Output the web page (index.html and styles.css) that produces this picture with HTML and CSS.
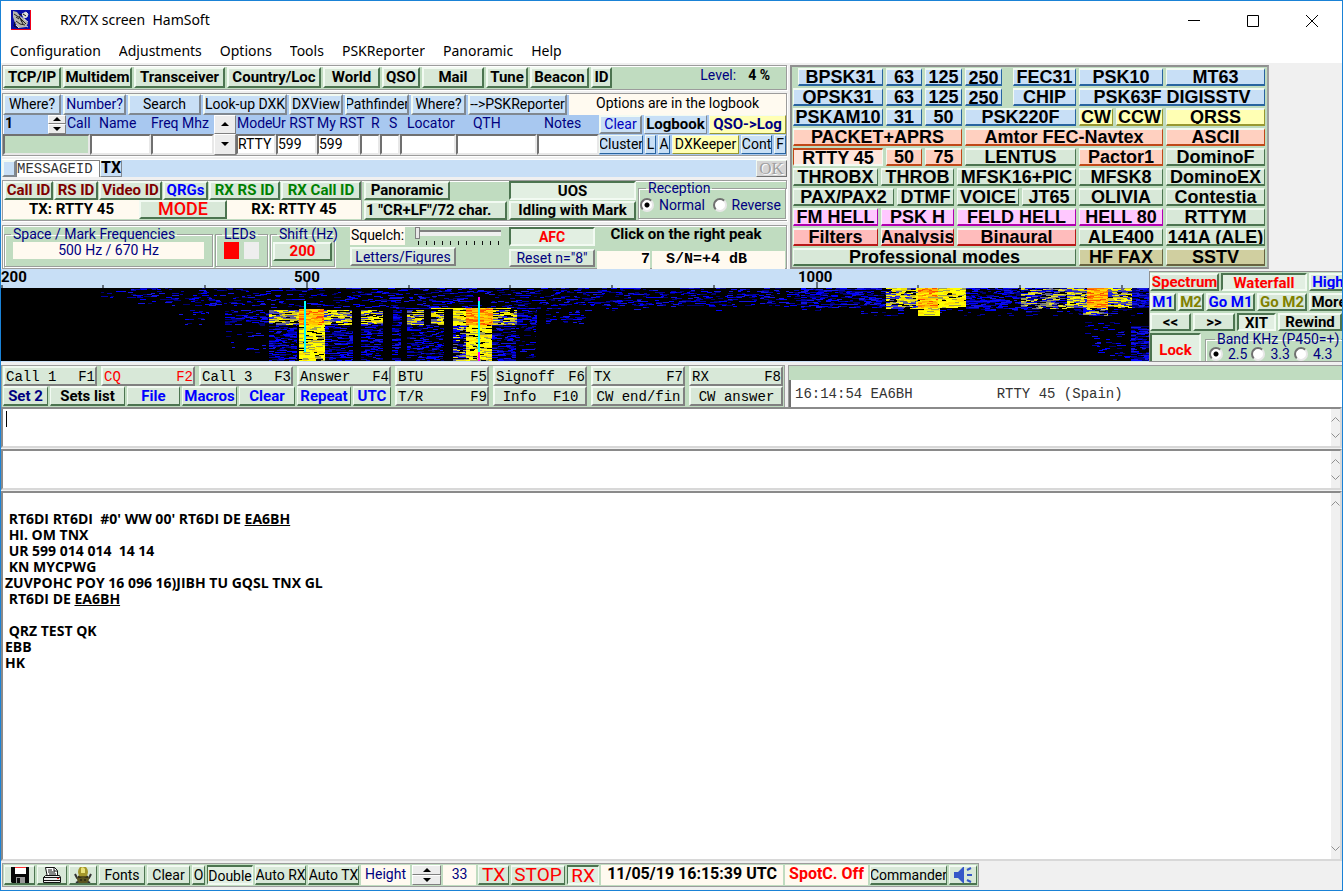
FILE: index.html
```html
<!DOCTYPE html>
<html lang="en">
<head>
<meta charset="utf-8">
<title>RX/TX screen HamSoft</title>
<link rel="stylesheet" href="styles.css">
</head>
<body>
<div class="window">
  <header class="titlebar">
    <svg class="app-icon" viewBox="0 0 20 20" aria-hidden="true">
      <rect width="20" height="20" fill="#f00018"/><rect width="19" height="19" fill="#0a10a8"/>
      <path d="M2 1l4 1 3 4 5 3 3 4-2 4-7 1-4-5-2-6z" fill="#b8b8b0"/>
      <path d="M3 4l6 4 6 6M5 11l4 3 5 1M8 6l3 6M5 7l3 2M10 10l2 4" stroke="#222" fill="none"/>
      <path d="M11 4l4-2 2 2-1 3-3 1zM5 15l3 3M13 9l4 3M15 16l2 1" fill="#e4e4dc" stroke="#ddd"/>
      <path d="M12 4l3 2M4 12l-1 4 4 2M11 5l-3-1" stroke="#111" fill="none"/>
    </svg>
    <span class="title-text">RX/TX screen  HamSoft</span>
    <div class="caption-buttons">
      <button aria-label="Minimize"><svg viewBox="0 0 12 12"><path d="M0 5.500h12"/></svg></button>
      <button aria-label="Maximize"><svg viewBox="0 0 12 12"><path d="M.5.5h11v11H.5z"/></svg></button>
      <button aria-label="Close"><svg viewBox="0 0 12 12"><path d="M0 0l12 12M12 0L0 12"/></svg></button>
    </div>
  </header>
  <nav class="menubar">
    <button>Configuration</button><button>Adjustments</button><button>Options</button><button>Tools</button><button>PSKReporter</button><button>Panoramic</button><button>Help</button>
  </nav>

  <main class="upper">
    <div class="left">
      <section class="panel tools bold">
        <button class="b">TCP/IP</button><button class="b">Multidem</button><button class="b">Transceiver</button><button class="b">Country/Loc</button><button class="b">World</button><button class="b">QSO</button><button class="b">Mail</button><button class="b">Tune</button><button class="b">Beacon</button><button class="b">ID</button>
        <div class="level"><span>Level:</span><output>4 %</output></div>
      </section>

      <section class="panel logbook">
        <div class="lookup">
          <button class="b sky">Where?</button><button class="b sky navy">Number?</button><button class="b sky">Search</button><button class="b sky">Look-up DXK</button><button class="b sky">DXView</button><button class="b sky">Pathfinder</button><button class="b sky">Where?</button><button class="b sky">--&gt;PSKReporter</button>
          <span class="cream">Options are in the logbook</span>
        </div>
        <div class="entry">
          <div class="entry-fields">
            <div class="labels">
              <strong>1</strong>
              <span class="spin"><button aria-label="Next record"><i class="up"></i></button><button aria-label="Previous record"><i class="down"></i></button></span>
              <label for="f-call">Call</label><label for="f-name">Name</label><label for="f-freq">Freq Mhz</label>
              <button class="step" aria-label="Mode up"><i class="up"></i></button>
              <label for="f-mode">Mode</label><label for="f-ur">Ur RST</label><label for="f-my">My RST</label><label for="f-r">R</label><label for="f-s">S</label><label for="f-loc">Locator</label><label for="f-qth">QTH</label><label for="f-notes">Notes</label>
            </div>
            <div class="inputs">
              <input id="f-call" class="green"><input id="f-name"><input id="f-freq">
              <button class="step" aria-label="Mode down"><i class="down"></i></button>
              <input id="f-mode" value="RTTY"><input id="f-ur" value="599"><input id="f-my" value="599"><input id="f-r"><input id="f-s"><input id="f-loc"><input id="f-qth"><input id="f-notes">
            </div>
          </div>
          <div class="entry-actions">
            <div class="act1"><button class="b sky blue">Clear</button><button class="b sky bold">Logbook</button><button class="b yellow navy bold">QSO-&gt;Log</button></div>
            <div class="act2"><button class="b azure">Cluster</button><button class="b azure">L</button><button class="b azure">A</button><button class="b yellow">DXKeeper</button><button class="b azure">Cont</button><button class="b azure">F</button></div>
          </div>
        </div>
      </section>

      <section class="message">
        <button class="b sky" aria-label="Message"></button>
        <input aria-label="Message identifier" value="MESSAGEID">
        <button class="b sky bold">TX</button>
        <button class="b gray ok" disabled>OK</button>
      </section>

      <section class="panel ids bold">
        <div class="idbox">
          <div class="idrow"><button class="b maroon">Call ID</button><button class="b maroon">RS ID</button><button class="b maroon">Video ID</button><button class="b blue">QRGs</button><button class="b forest">RX RS ID</button><button class="b forest">RX Call ID</button></div>
          <div class="moderow"><span class="cream">TX: RTTY 45</span><button class="b red big">MODE</button><span class="cream">RX: RTTY 45</span></div>
        </div>
        <div class="pan"><button class="b">Panoramic</button><button class="b">1 "CR+LF"/72 char.</button></div>
        <div class="uos"><button class="b pressed">UOS</button><button class="b">Idling with Mark</button></div>
        <fieldset class="reception"><legend>Reception</legend>
          <label><input type="radio" name="rx" checked>Normal</label><label><input type="radio" name="rx">Reverse</label>
        </fieldset>
      </section>

      <section class="panel tuning">
        <fieldset><legend>Space / Mark Frequencies</legend><div class="cream navy freq">500 Hz / 670 Hz</div></fieldset>
        <fieldset><legend>LEDs</legend><div class="leds"><i class="led on"></i><i class="led"></i></div></fieldset>
        <fieldset><legend>Shift (Hz)</legend><button class="b red bold shift">200</button></fieldset>
        <div class="squelch">
          <div class="squelch-top"><label class="cream" for="squelch">Squelch:</label><span class="slider"><input id="squelch" type="range" value="0"></span></div>
          <button class="b navy soft">Letters/Figures</button>
        </div>
        <div class="afc"><button class="b pressed red bold">AFC</button><button class="b navy soft">Reset n="8"</button></div>
        <div class="peak"><strong>Click on the right peak</strong><div class="sn"><output class="cream">7</output><output class="cream">S/N=+4 dB</output></div></div>
      </section>
    </div>

    <section class="modes">
      <div class="m r1"><button class="b azure">BPSK31</button><button class="b azure">63</button><button class="b azure">125</button><button class="b azure low">250</button><button class="b azure after">FEC31</button><button class="b azure">PSK10</button><button class="b azure">MT63</button></div>
      <div class="m r2"><button class="b azure">QPSK31</button><button class="b azure">63</button><button class="b azure">125</button><button class="b azure low">250</button><button class="b azure after">CHIP</button><button class="b azure">PSK63F DIGISSTV</button></div>
      <div class="m r3"><button class="b azure">PSKAM10</button><button class="b azure">31</button><button class="b azure">50</button><button class="b azure">PSK220F</button><button class="b yellow">CW</button><button class="b yellow">CCW</button><button class="b yellow">QRSS</button></div>
      <div class="m r4"><button class="b salmon">PACKET+APRS</button><button class="b salmon">Amtor FEC-Navtex</button><button class="b salmon">ASCII</button></div>
      <div class="m r5"><button class="b salmon pressed">RTTY 45</button><button class="b salmon">50</button><button class="b salmon">75</button><button class="b">LENTUS</button><button class="b salmon">Pactor1</button><button class="b">DominoF</button></div>
      <div class="m r6"><button class="b">THROBX</button><button class="b">THROB</button><button class="b">MFSK16+PIC</button><button class="b">MFSK8</button><button class="b">DominoEX</button></div>
      <div class="m r7"><button class="b">PAX/PAX2</button><button class="b">DTMF</button><button class="b">VOICE</button><button class="b">JT65</button><button class="b">OLIVIA</button><button class="b">Contestia</button></div>
      <div class="m r6"><button class="b pink">FM HELL</button><button class="b pink">PSK H</button><button class="b pink">FELD HELL</button><button class="b pink">HELL 80</button><button class="b">RTTYM</button></div>
      <div class="m r6"><button class="b rose">Filters</button><button class="b rose">Analysis</button><button class="b rose">Binaural</button><button class="b">ALE400</button><button class="b">141A (ALE)</button></div>
      <div class="m r10"><button class="b">Professional modes</button><button class="b khaki">HF FAX</button><button class="b khaki">SSTV</button></div>
    </section>
  </main>

  <section class="spectrum">
    <div class="scope">
      <svg class="scale" viewBox="0 0 1148 19" preserveAspectRatio="none" aria-label="Frequency scale">
        <path d="M1 16v3M102 16v3M204 16v3M306 13v6M408 16v3M509 16v3M611 16v3M713 16v3M816 13v6M917 16v3M1019 16v3M1121 16v3" stroke="#000" fill="none"/>
        <text x="0" y="13">200</text><text x="293" y="13">500</text><text x="797" y="13">1000</text>
      </svg>
      <canvas id="waterfall" width="1148" height="73"></canvas>
    </div>
    <div class="display bold">
      <div class="d1"><button class="b red">Spectrum</button><button class="b pressed red">Waterfall</button><button class="b blue">High</button></div>
      <div class="d2"><button class="b blue">M1</button><button class="b olive">M2</button><button class="b blue">Go M1</button><button class="b olive">Go M2</button><button class="b">More</button></div>
      <div class="d3"><button class="b">&lt;&lt;</button><button class="b">&gt;&gt;</button><button class="b pressed">XIT</button><button class="b">Rewind</button></div>
      <div class="d4"><button class="b pressed red">Lock</button>
        <fieldset class="band"><legend>Band KHz (P450=+)</legend><label><input type="radio" name="band" checked>2.5</label><label><input type="radio" name="band">3.3</label><label><input type="radio" name="band">4.3</label></fieldset>
      </div>
    </div>
  </section>

  <section class="macro-area">
    <div class="macros">
      <div class="k1"><button class="b key"><span>Call 1</span><span>F1</span></button><button class="b key red"><span>CQ</span><span>F2</span></button><button class="b key"><span>Call 3</span><span>F3</span></button><button class="b key"><span>Answer</span><span>F4</span></button><button class="b key"><span>BTU</span><span>F5</span></button><button class="b key"><span>Signoff</span><span>F6</span></button><button class="b key"><span>TX</span><span>F7</span></button><button class="b key"><span>RX</span><span>F8</span></button></div>
      <div class="k2">
        <div class="sets"><button class="b bold navy">Set 2</button><button class="b bold">Sets list</button><button class="b bold blue">File</button><button class="b bold blue">Macros</button><button class="b bold blue">Clear</button><button class="b bold blue">Repeat</button><button class="b bold blue">UTC</button></div>
        <button class="b key"><span>T/R</span><span>F9</span></button><button class="b key mid">Info  F10</button><button class="b key mid">CW end/fin</button><button class="b key mid">CW answer</button>
      </div>
    </div>
    <div class="spots"><pre>16:14:54 EA6BH          RTTY 45 (Spain)</pre></div>
  </section>

  <div class="pane small"><textarea aria-label="Transmit text"></textarea><i class="caret"></i><div class="bar"><svg viewBox="0 0 9 5"><path d="M.5 4.500l4-4 4 4"/></svg><svg viewBox="0 0 9 5"><path d="M.5.5l4 4 4-4"/></svg></div></div>
  <div class="pane small"><textarea aria-label="Secondary text"></textarea><div class="bar"><svg viewBox="0 0 9 5"><path d="M.5 4.500l4-4 4 4"/></svg><svg viewBox="0 0 9 5"><path d="M.5.5l4 4 4-4"/></svg></div></div>
  <div class="pane received">
<pre> RT6DI RT6DI  #0' WW 00' RT6DI DE <u>EA6BH</u>
 HI. OM TNX
 UR 599 014 014  14 14
 KN MYCPWG
ZUVPOHC POY 16 096 16)JIBH TU GQSL TNX GL
 RT6DI DE <u>EA6BH</u>

 QRZ TEST QK
EBB
HK</pre>
    <div class="bar"><svg viewBox="0 0 9 5"><path d="M.5 4.500l4-4 4 4"/></svg><svg viewBox="0 0 9 5"><path d="M.5.5l4 4 4-4"/></svg></div>
  </div>

  <footer class="status">
    <div class="status-row">
      <button class="b" aria-label="Save"><svg viewBox="0 0 20 18"><path d="M1 0h18v18H3l-2-2z" fill="#080808"/><path d="M5 0h11v8H5z" fill="#fff"/><path d="M5 0h11v2H5z" fill="#f33"/><path d="M6 11h9v7H6z" fill="#999"/><path d="M7 12h3v5H7z" fill="#111"/></svg></button>
      <button class="b" aria-label="Print"><svg viewBox="0 0 20 18"><path d="M5 9L3.500 1.500h9l3 3V9" fill="#fff" stroke="#111"/><path d="M6 4h4M6 6h7M7 8h7M12 1v4h3" stroke="#111" fill="none"/><path d="M3.500 9.500h14l1 2H1.500zM1.500 11.500h17v5h-17z" fill="#eee" stroke="#111"/><path d="M1 14.500h18" stroke="#111"/><path d="M15 12.500h2" stroke="#f22"/></svg></button>
      <button class="b" aria-label="Debug"><svg viewBox="0 0 20 18"><path d="M2 8l2 4 3 1M18 8l-2 4-3 1M3 17l4-2M17 17l-4-2" stroke="#333" stroke-width="2" fill="none"/><ellipse cx="10" cy="13" rx="6" ry="5" fill="#5b5420"/><ellipse cx="10" cy="6" rx="5" ry="6" fill="#a3962a"/><path d="M8 2q2-2 4 1v4H8z" fill="#e9e27a"/><path d="M5 11h10M7 14h2M11 14h2" stroke="#111"/></svg></button>
      <button class="b">Fonts</button><button class="b">Clear</button><button class="b">O</button><button class="b pressed">Double</button><button class="b">Auto RX</button><button class="b">Auto TX</button>
      <span class="cream navy">Height</span>
      <span class="spin"><button aria-label="Increase height"><i class="up"></i></button><button aria-label="Decrease height"><i class="down"></i></button></span>
      <output class="cream navy">33</output>
      <button class="b red huge">TX</button><button class="b red huge">STOP</button><button class="b pressed red huge">RX</button>
      <time class="cream bold">11/05/19 16:15:39 UTC</time>
      <span class="cream red bold">SpotC. Off</span>
      <button class="b">Commander</button>
      <button class="b" aria-label="Sound"><svg viewBox="0 0 20 18"><path d="M1 6h4l6-6v18l-6-6H1z" fill="#3558c8"/><path d="M14 4l4-2M14 9h5M14 14l4 2" stroke="#3558c8" stroke-width="2"/></svg></button>
    </div>
  </footer>
</div>
<script src="waterfall.js"></script>
</body>
</html>
```
FILE: styles.css
```css
* { box-sizing: border-box; }
body { margin: 0; background: #f0f0f0; font: 14px/16px Roboto, "Liberation Sans", sans-serif; color: #000; }
button, input, textarea, output { font: inherit; color: inherit; margin: 0; padding: 0; border-radius: 0; }
button { white-space: pre; overflow: hidden; }
fieldset { margin: 0; padding: 0; min-width: 0; border: 1px solid #9a9e9a; box-shadow: inset 1px 1px #fff, 1px 1px #fff; }
legend { padding: 0 2px; margin-left: 6px; line-height: 15px; color: #000080; font-weight: 400; white-space: nowrap; }
i { display: block; }

.window { display: flex; flex-direction: column; min-height: 100vh; border: 1px solid #1a82d6; overflow: hidden; }

.titlebar { display: flex; align-items: center; height: 38px; padding-left: 10px; background: #fff; font: 14px/20px "Noto Sans", "Open Sans", sans-serif; }
.app-icon { width: 20px; height: 20px; }
.title-text { margin-left: 29px; white-space: pre; }
.caption-buttons { display: flex; margin-left: auto; padding-right: 1px; }
.caption-buttons button { width: 59px; height: 36px; border: 0; background: none; }
.caption-buttons svg { width: 12px; height: 12px; fill: none; stroke: #000; vertical-align: middle; }
.menubar { display: flex; gap: 18px; height: 24px; padding-left: 9px; background: #fff; font: 14px/24px "Noto Sans", "Open Sans", sans-serif; }
.menubar button { border: 0; background: none; }

/* Raised button; --face and --edge give each family its colour */
.b { --face: #d8e8d8; --edge: #4c7450; min-width: 0; border: 2px solid; border-color: #f2faf2 var(--edge) var(--edge) #f2faf2; background: var(--face); line-height: 16px; text-align: center; display: flex; align-items: center; justify-content: center; }
.sky { --face: #c8dff6; --edge: #808890; }
.azure { --face: #c8dff6; --edge: #2864a0; }
.yellow { --face: #ffffb4; --edge: #989830; }
.salmon { --face: #ffd0c0; --edge: #c04818; }
.pink { --face: #ffc8ff; --edge: #b000b0; }
.rose { --face: #ffbcbc; --edge: #b81818; }
.khaki { --face: #d0cfa0; --edge: #686440; }
.gray { --face: #d4d4d4; --edge: #707070; color: #a0a0a0; }
.soft { --edge: #808080; }
.pressed { border-color: var(--edge) #f2faf2 #f2faf2 var(--edge); background: #e2efe2; padding-top: 2px; }
.salmon.pressed { background: #ffe6dc; }
.bold { font-weight: 700; }
.navy { color: #000080; }
.blue { color: #0000ff; }
.sky.blue { color: #0000c0; }
.red { color: #ff0000; }
.maroon { color: #800000; }
.forest { color: #008000; }
.olive { color: #808000; }
.cream { background: #fffaf0; text-align: center; }
.big { font-size: 18px; font-weight: 500; }
.huge { font-size: 19px; }
.up, .down { margin: 0 auto; width: 0; height: 0; border: 4px solid transparent; }
.up { border-top: 0; border-bottom: 4px solid #000; }
.down { border-bottom: 0; border-top: 4px solid #000; }

.upper { display: flex; gap: 3px; padding-top: 2px; height: 206px; }
.left { display: flex; flex-direction: column; flex: 0 0 786px; gap: 3px; padding-left: 1px; }
.panel { background: #c0dcc0; border: 1px solid #9c9c9c; box-shadow: 1px 1px #fff, inset 1px 1px #fff; }

.tools { display: grid; grid-template-columns: 58px 69px 91px 94px 57px 38px 62px 42px 59px 21px 1fr; gap: 2px; height: 25px; padding: 1px 0; font-size: 15px; }
.level { display: flex; justify-content: flex-end; gap: 12px; padding-right: 16px; color: #000080; font-size: 14px; font-weight: 400; line-height: 16px; }
.level output { color: #000; font-weight: 700; }

.logbook { height: 63px; background: #a8c8f0; }
.lookup { display: grid; grid-template-columns: 58px 63px 73px 84px 54px 64px 55px 99px 1fr; column-gap: 2px; height: 21px; }
.lookup .cream { line-height: 18px; }
.entry { display: grid; grid-template-columns: 596px 1fr; }
.labels { display: grid; grid-template-columns: 45px 18px 32px 52px 64px 22px 35px 45px 54px 18px 18px 66px 71px 1fr; height: 19px; color: #000080; white-space: nowrap; line-height: 17px; }
.labels strong { color: #000; padding-left: 2px; }
.labels label { padding-left: 1px; }
.spin { display: grid; grid-template-rows: 1fr 1fr; }
.spin button, .step { border: 1px solid; border-color: #fff #808080 #808080 #fff; background: #ececec; }
.inputs { display: grid; grid-template-columns: 87px 61px 63px 22px 40px 41px 43px 20px 20px 56px 81px 1fr; height: 21px; }
.inputs input { min-width: 0; width: 100%; border: 2px solid; border-color: #707070 #e8e8e8 #e8e8e8 #707070; background: #fff; }
.inputs .green { background: #c0dcc0; }
.act1, .act2 { display: grid; gap: 2px; height: 20px; padding-bottom: 1px; }
.act1 { grid-template-columns: 43px 63px 1fr; }
.act2 { grid-template-columns: 44px 11px 12px 67px 31px 1fr; }
.act1 .bold { font-size: 15px; border-width: 1px; }
.act2 .b { border-width: 1px; }

.message { display: flex; height: 18px; background: #c8dff6; border-top: 1px solid #fff; }
.message .b:first-child { width: 14px; }
.message input { width: 84px; height: 17px; border: 1px solid #808080; border-bottom: 0; font: 14px/16px "Liberation Mono", monospace; background: #fff; color: #333; }
.message .bold { width: 22px; font-size: 16px; border-width: 1px; }
.message .ok { width: 31px; margin-left: auto; border-width: 1px; font: 17px/15px "Liberation Serif", serif; text-shadow: 1px 1px #fff; }

.ids { display: grid; grid-template-columns: 359px 143px 127px 1fr; gap: 2px; height: 41px; font-size: 15px; }
.idbox { border-right: 1px solid #9c9c9c; }
.idrow { display: grid; grid-template-columns: 49px 44px 63px 45px 71px 1fr; gap: 1px; height: 19px; padding-left: 1px; }
.moderow { display: grid; grid-template-columns: 135px 88px 1fr; height: 19px; padding-left: 1px; }
.moderow .cream { line-height: 18px; }
.pan, .uos { display: grid; grid-template-rows: 19px 19px; gap: 1px; }
.pan .b:first-child { width: 86px; }
.pan .b:last-child { justify-content: flex-start; }
.reception { display: flex; align-items: center; justify-content: space-between; padding: 0 4px 4px 1px; font-size: 14px; font-weight: 400; height: 38px; color: #000080; }
.reception label, .band label { display: flex; align-items: center; gap: 5px; }
input[type=radio] { appearance: none; width: 14px; height: 14px; border: 2px solid; border-color: #707070 #e8e8e8 #e8e8e8 #707070; border-radius: 50%; background: #fff; }
input[type=radio]:checked { background: radial-gradient(circle, #000 0 2px, #fff 3px); }

.tuning { display: grid; grid-template-columns: 209px 53px 65px 170px 86px 1fr; gap: 2px; height: 45px; padding-left: 1px; margin-top: 1px; }
.tuning fieldset { height: 40px; margin-top: 1px; }
.freq { height: 17px; line-height: 17px; margin: 0 8px; }
.leds { display: flex; gap: 5px; padding-left: 8px; }
.led { width: 15px; height: 17px; background: #eee; }
.led.on { background: #f00; }
.shift { width: 59px; height: 19px; margin: 0 auto; font-size: 15px; }
.squelch { display: flex; flex-direction: column; justify-content: space-between; align-items: flex-start; padding: 1px 0 2px 13px; }
.squelch-top { display: flex; gap: 10px; }
.squelch-top .cream { width: 55px; height: 18px; }
.squelch .soft { width: 106px; height: 19px; }
.slider { width: 86px; height: 19px; background: repeating-linear-gradient(90deg, #111 0 1px, transparent 1px 8px) 3px 14px / 82px 4px no-repeat; }
.slider input { display: block; appearance: none; width: 86px; height: 12px; background: linear-gradient(#808080 0 2px, #f0f0f0 2px) 0 3px / 100% 6px no-repeat; }
.slider input::-webkit-slider-thumb { appearance: none; width: 5px; height: 12px; border: 1px solid #808080; background: #e8e8e8; }
.afc { display: grid; grid-template-rows: 19px 18px; gap: 3px; padding-top: 1px; }
.peak { display: flex; flex-direction: column; justify-content: space-between; padding-right: 1px; }
.peak strong { text-align: center; line-height: 17px; font-size: 15px; padding-right: 10px; }
.sn { display: grid; grid-template-columns: 53px 1fr; gap: 2px; height: 17px; font: bold 15px/18px "Liberation Mono", monospace; }
.sn .cream:first-child { text-align: right; }
.sn .cream:last-child { padding-right: 24px; }

.modes { flex: 0 1 479px; display: grid; grid-auto-rows: 18px; row-gap: 2px; height: 204px; padding: 1px 2px 0 1px; background: #c0dcc0; border: 2px solid #909090; border-right-color: #a0a0a0; font: bold 18px/18px "Liberation Sans", Arial, sans-serif; }
.m { display: grid; column-gap: 3px; }
.m .b { font: inherit; border-right-width: 1px; border-left-width: 1px; }
.m .low { padding-top: 2px; }
.r1 { grid-template-columns: 85px 36px 37px 37px 71px 84px 1fr; padding-left: 5px; }
.r2 { grid-template-columns: 90px 36px 37px 37px 71px 1fr; }
.r1 .after, .r2 .after { margin-left: 8px; }
.r3 { grid-template-columns: 90px 36px 37px 111px 34px 47px 1fr; }
.r4 { grid-template-columns: 169px 198px 1fr; }
.r5 { grid-template-columns: 90px 36px 37px 111px 84px 1fr; }
.r6 { grid-template-columns: 85px 73px 119px 84px 1fr; }
.r7 { grid-template-columns: 101px 57px 62px 54px 84px 1fr; }
.r10 { grid-template-columns: 283px 84px 1fr; }

.spectrum { display: grid; grid-template-columns: 1fr 193px; height: 93px; }
.scope { background: #c8dff6; display: flex; flex-direction: column; }
.scale { width: 100%; height: 19px; display: block; }
.scale text { font: bold 15px Roboto, "Liberation Sans", sans-serif; }
#waterfall { width: 100%; height: 73px; display: block; image-rendering: pixelated; }
.display { margin-top: 2px; padding: 1px 0 0; background: #c0dcc0; border: 1px solid #909090; border-right: 0; font-size: 15px; display: grid; grid-template-rows: 18px 18px 18px 31px; row-gap: 2px; overflow: hidden; }
.display > div { display: grid; column-gap: 2px; }
.d1 { grid-template-columns: 69px 86px 38px; }
.d2 { grid-template-columns: 26px 26px 49px 50px 40px; }
.d3 { grid-template-columns: 41px 42px 39px 64px; }
.d4 { grid-template-columns: 51px 140px; }
.band { display: flex; gap: 4px; margin-left: 2px; padding-left: 3px; height: 31px; font-size: 14px; font-weight: 400; color: #000080; }
.band legend { line-height: 12px; }

.macro-area { display: grid; grid-template-columns: 784px 1fr; gap: 3px; height: 45px; padding-top: 3px; }
.macros, .spots { background: #c0dcc0; border: 1px solid #9c9c9c; border-bottom: 0; }
.macros { padding-left: 1px; display: grid; grid-template-rows: 20px 20px; }
.k1 { display: grid; grid-template-columns: repeat(8, 94px); column-gap: 4px; }
.k2 { display: grid; grid-template-columns: 388px repeat(4, 94px); column-gap: 4px; }
.sets { display: grid; grid-template-columns: 45px 75px 53px 55px 56px 54px 1fr; column-gap: 2px; font-size: 15px; }
.sets .b { border-left-width: 1px; border-right-width: 1px; }
.key { --edge: #808080; justify-content: space-between; font: 14px/16px "Liberation Mono", monospace; padding: 1px 0 0 1px; }
.mid { justify-content: center; }
.spots { padding-top: 14px; border-right: 0; }
.spots pre { margin: 0; height: 27px; padding: 6px 4px; background: #fff; border-left: 2px solid #707070; font: 14px/16px "Liberation Mono", monospace; color: #333; }

.pane { display: flex; position: relative; margin-bottom: 1px; border: 2px solid; border-color: #8a8a8a #d8d8d8 #d8d8d8 #8a8a8a; background: #fff; }
.pane textarea { flex: 1; resize: none; border: 0; outline: 0; background: transparent; padding: 2px; }
.small { height: 41px; }
.caret { position: absolute; left: 3px; top: 2px; width: 1px; height: 16px; background: #000; }
.bar { width: 9px; background: #f0f0f0; display: flex; flex-direction: column; justify-content: space-between; align-items: center; padding: 8px 0; }
.bar svg { width: 9px; height: 5px; fill: none; stroke: #909090; }
.received { flex: 1; margin-bottom: 0; }
.received pre { flex: 1; margin: 0; padding: 18px 2px; font: bold 14px/16px "Open Sans", "Noto Sans", sans-serif; }

.status { height: 29px; padding: 2px 1px 0; }
.status-row { display: grid; grid-template-columns: 31px 30px 28px 46px 43px 13px 46px 51px 51px 49px 29px 33px 31px 54px 32px 182px 83px 77px 28px; gap: 2px; width: max-content; height: 24px; padding: 1px; border: 1px solid #9c9c9c; background: #c0dcc0; }
.status .b { border-left-width: 1px; border-right-width: 1px; }
.status .b svg { width: 20px; height: 18px; flex: none; }
.status .cream { line-height: 18px; white-space: nowrap; }
.status .cream.bold { font-size: 16px; }
```
FILE: waterfall.js
```js
const canvas = document.getElementById("waterfall");
const ctx = canvas.getContext("2d");
let seed = 7;
const random = () => (seed = (seed * 16807) % 2147483647) / 2147483647;

const blue = ["#0000a8", "#0000ff", "#000070", "#1414e0"];
const gray = ["#0000ff", "#606090", "#9a9a60", "#0000a0", "#e8e020"];
const mixed = ["#ffff00", "#c8c030", "#606090", "#2020e0", "#f0e000"];
const yellow = ["#ffff00", "#ffe000", "#a0a050", "#ffff00", "#ffff00"];
const orange = ["#ffb000", "#ff8000", "#ffc800", "#ffe000", "#ff5000"];

// Signal zones: x, y, width, height, fill density, palette
const zones = [
  [100, 0, 60, 12, 0.1, blue], [130, 0, 140, 18, 0.22, blue], [270, 0, 290, 20, 0.26, blue],
  [560, 0, 240, 18, 0.35, blue], [560, 18, 260, 6, 0.06, blue], [800, 0, 90, 20, 0.55, blue],
  [885, 0, 32, 21, 0.85, mixed], [915, 0, 50, 20, 0.9, yellow], [917, 0, 20, 20, 0.9, orange],
  [965, 0, 55, 21, 0.65, blue], [1020, 0, 46, 21, 0.75, gray], [1066, 0, 22, 20, 0.9, mixed],
  [1086, 0, 21, 20, 1, orange], [1107, 0, 24, 20, 0.8, mixed], [1131, 0, 17, 20, 0.8, blue],
  [860, 21, 285, 7, 0.2, blue], [917, 20, 22, 8, 0.85, yellow], [1082, 20, 25, 8, 0.8, gray],
  [1084, 34, 46, 39, 0.12, blue], [1130, 38, 18, 35, 0.68, blue],
  [390, 20, 170, 1, 0.8, blue], [430, 20, 80, 1, 1, yellow],
  [178, 22, 30, 15, 0.12, blue], [224, 22, 44, 15, 0.45, blue], [268, 22, 30, 15, 0.85, mixed],
  [298, 21, 25, 16, 1, orange], [323, 22, 28, 15, 0.85, mixed], [360, 22, 22, 15, 0.8, mixed],
  [392, 22, 9, 15, 0.7, blue], [406, 22, 17, 15, 0.8, mixed], [430, 22, 13, 15, 0.85, mixed],
  [452, 21, 14, 16, 0.9, yellow], [465, 20, 27, 17, 1, orange], [492, 22, 24, 15, 0.85, mixed],
  [516, 22, 20, 15, 0.6, blue], [545, 22, 40, 14, 0.2, blue],
  [225, 37, 40, 28, 0.08, blue], [268, 37, 28, 36, 0.5, blue], [298, 37, 26, 36, 0.9, yellow],
  [324, 37, 28, 36, 0.5, blue], [360, 37, 22, 36, 0.5, blue], [391, 37, 9, 36, 0.45, blue],
  [406, 37, 37, 36, 0.4, blue], [452, 37, 14, 36, 0.75, gray], [465, 37, 26, 36, 0.9, yellow],
  [491, 37, 24, 36, 0.55, blue], [515, 37, 20, 36, 0.18, blue]
];

ctx.fillStyle = "#000";
ctx.fillRect(0, 0, canvas.width, canvas.height);
for (const [x, y, w, h, density, palette] of zones) {
  for (let row = y; row < y + h; row++) {
    for (let col = x; col < x + w;) {
      const run = Math.min(3 + Math.floor(random() * 5), x + w - col);
      if (random() < density) {
        ctx.fillStyle = palette[Math.floor(random() * palette.length)];
        ctx.fillRect(col, row, run, 1);
      }
      col += run;
    }
  }
}

// Space and mark cursors
ctx.fillStyle = "#00ffff";
ctx.fillRect(303, 13, 2, 51);
ctx.fillRect(477, 13, 2, 51);
ctx.fillStyle = "#ff00ff";
ctx.fillRect(477, 9, 2, 4);
ctx.fillRect(477, 64, 2, 9);
```
